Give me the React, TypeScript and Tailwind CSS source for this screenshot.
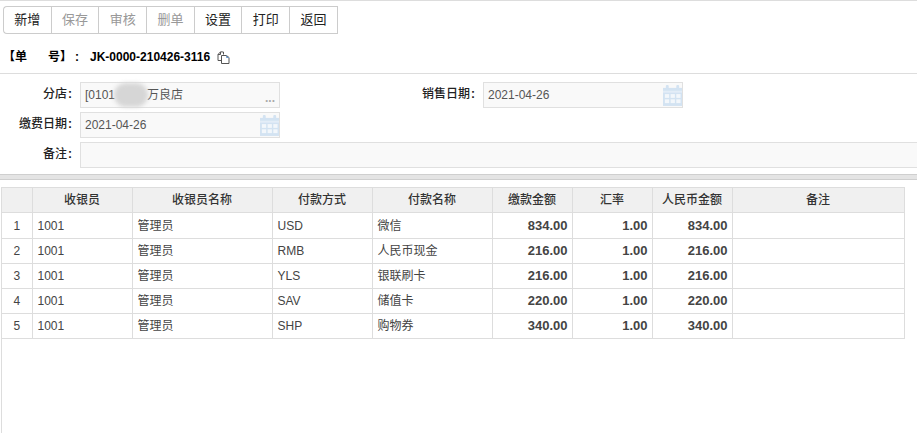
import React from "react";

const buttons: [string, boolean][] = [
  ["新增", false],
  ["保存", true],
  ["审核", true],
  ["删单", true],
  ["设置", false],
  ["打印", false],
  ["返回", false],
];
const headers = ["", "收银员", "收银员名称", "付款方式", "付款名称", "缴款金额", "汇率", "人民币金额", "备注"];
const rows = [
  ["1", "1001", "管理员", "USD", "微信", "834.00", "1.00", "834.00", ""],
  ["2", "1001", "管理员", "RMB", "人民币现金", "216.00", "1.00", "216.00", ""],
  ["3", "1001", "管理员", "YLS", "银联刷卡", "216.00", "1.00", "216.00", ""],
  ["4", "1001", "管理员", "SAV", "储值卡", "220.00", "1.00", "220.00", ""],
  ["5", "1001", "管理员", "SHP", "购物券", "340.00", "1.00", "340.00", ""],
];
const widths = [30, 100, 140, 100, 120, 80, 80, 80, 172];

function Calendar() {
  return (
    <svg width="19" height="21" viewBox="0 0 20 22" className="absolute right-0 top-[2px]">
      <rect x="0" y="3" width="20" height="19" fill="#d3e3f2" />
      <rect x="3" y="0" width="3" height="5" rx="1" fill="#d3e3f2" />
      <rect x="14" y="0" width="3" height="5" rx="1" fill="#d3e3f2" />
      <rect x="0" y="6" width="20" height="2" fill="#e3edf7" />
      {[9.5, 15].map((y) =>
        [2, 8, 14].map((x) => <rect key={`${x}-${y}`} x={x} y={y} width="4.5" height="4" fill="#f3f7fb" />)
      )}
    </svg>
  );
}

function Field({ className, children }: { className: string; children?: React.ReactNode }) {
  return (
    <div className={`relative h-[26px] border border-[#e0e0e0] bg-[#f9f9f9] pl-[4px] text-[12px] leading-[24px] text-[#555] ${className}`}>
      {children}
    </div>
  );
}

function Label({ text, className }: { text: string; className: string }) {
  return (
    <div className={`flex justify-end pr-[3px] text-[12px] font-medium leading-[24px] text-[#222] ${className}`}>
      <span>{text}</span>
      <span className="w-[5px] text-right font-bold">:</span>
    </div>
  );
}

export default function App() {
  return (
    <div className="h-[433px] w-[917px] overflow-hidden border-t border-[#dddddd] bg-white font-['Liberation_Sans','Noto_Sans_CJK_SC',sans-serif]">
      <div className="ml-[3px] mt-[5px] flex h-[28px] w-fit rounded-l-[4px] border border-[#cccccc] border-r-0">
        {buttons.map(([t, off]) => (
          <div
            key={t}
            className={`flex h-full w-[47.7px] items-center justify-center border-r border-[#cccccc] text-[13px] ${off ? "text-[#999999]" : "text-[#222222]"}`}
          >
            {t}
          </div>
        ))}
      </div>

      <div className="flex h-[40px] items-center border-b border-[#dddddd] pl-[3px] pt-[6px] text-[12px] font-bold text-black">
        <span className="flex w-[87px]">
          <span>【单</span>
          <span className="w-[21px]" />
          <span>号】</span>
          <span className="ml-[3px]">:</span>
        </span>
        <span>JK-0000-210426-3116</span>
        <svg width="13" height="13" viewBox="0 0 13 13" className="ml-[7px] mt-[1px]" fill="none" stroke="#555" strokeWidth="1">
          <path d="M6.5 3.5V1L3.5 .8 1 3.5V9.5H4" />
          <path d="M1 3.5H3.5V1" />
          <path d="M4.5 4.5H9.5L12 6.5V12.5H4.5Z" fill="#fff" />
          <path d="M9.5 4.5V6.5H12" stroke="#6d97c4" />
        </svg>
      </div>

      <div className="flex flex-col gap-[4px] pt-[8px]">
        <div className="flex">
          <Label text="分店" className="w-[75px]" />
          <Field className="ml-[5px] w-[200px]">
            [0101
            <span className="ml-[32px]">万良店</span>
            <span className="absolute left-[33px] top-0 h-[24px] w-[34px] rounded-[12px] bg-[#d6d6d6] blur-[2px]" />
            <span className="absolute right-[4px] top-[3px] font-bold text-[#aaa]">...</span>
          </Field>
          <Label text="销售日期" className="w-[198px]" />
          <Field className="ml-[5px] w-[200px]">
            2021-04-26
            <Calendar />
          </Field>
        </div>
        <div className="flex">
          <Label text="缴费日期" className="w-[75px]" />
          <Field className="ml-[5px] w-[200px]">
            2021-04-26
            <Calendar />
          </Field>
        </div>
        <div className="flex">
          <Label text="备注" className="w-[75px]" />
          <Field className="ml-[5px] flex-1 border-r-0" />
        </div>
      </div>

      <div className="mt-[6px] h-[6px] border-y border-[#cfcfcf] bg-[#e4e4e4]" />

      <div className="ml-[1px] mt-[7px] h-[300px] border-l border-[#dddddd]">
        <table className="table-fixed border-collapse text-[12px] text-[#444]">
          <colgroup>
            {widths.map((w, i) => (
              <col key={i} style={{ width: w }} />
            ))}
          </colgroup>
          <thead>
            <tr className="h-[25px] bg-[#f0f0f0]">
              {headers.map((h, i) => (
                <th key={i} className={`border border-[#dddddd] p-0 text-center font-medium text-[#333] ${i === 0 ? "border-l-0" : ""}`}>
                  {h}
                </th>
              ))}
            </tr>
          </thead>
          <tbody>
            {rows.map((r, ri) => (
              <tr key={ri} className={ri === 0 ? "h-[26px]" : "h-[25px]"}>
                {r.map((c, i) => {
                  const num = i >= 5 && i <= 7;
                  return (
                    <td
                      key={i}
                      className={`border border-[#dddddd] p-0 ${i === 0 ? "border-l-0 text-center" : num ? "pr-[4px] text-right text-[13px] font-bold" : "pl-[5px]"}`}
                    >
                      {c}
                    </td>
                  );
                })}
              </tr>
            ))}
          </tbody>
        </table>
      </div>
    </div>
  );
}
